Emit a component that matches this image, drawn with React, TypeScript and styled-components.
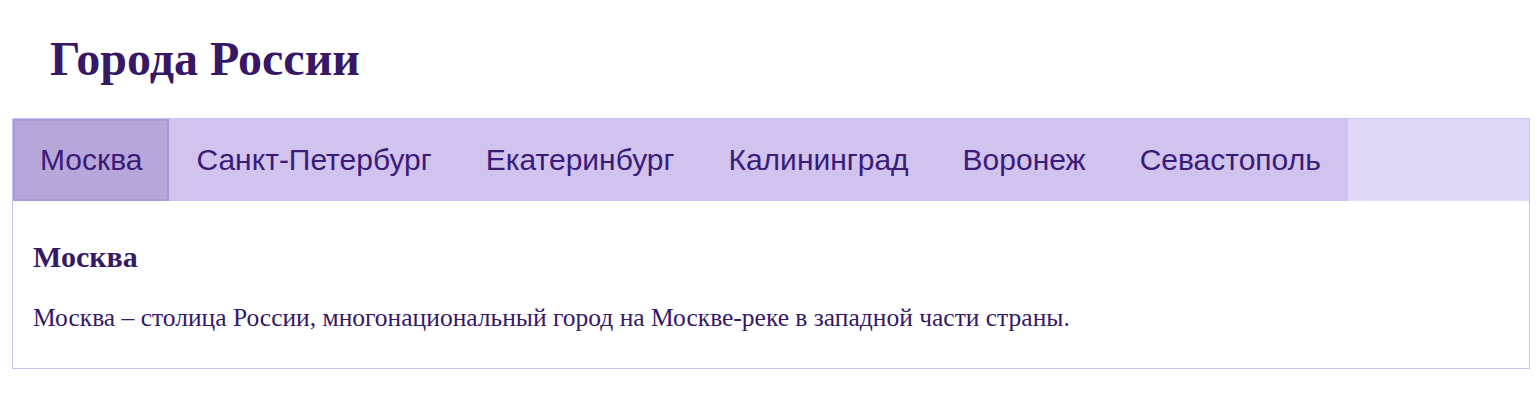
import { useState } from 'react';
import styled, { createGlobalStyle } from 'styled-components';

const GlobalStyle = createGlobalStyle`
  body {
    margin: 0;
    background: #fff;
    font-family: "Liberation Serif", "Times New Roman", serif;
  }
`;

const Page = styled.div`
  padding: 0 10px 36px 12px;
`;

const Title = styled.h1`
  margin: 0;
  padding: 30px 0 30px 38px;
  font-size: 48px;
  line-height: 58px;
  font-weight: bold;
  color: #361866;
`;

const TabsBox = styled.div`
  border: 1px solid #c8c4fa;
`;

const TabBar = styled.div`
  display: flex;
  background: #e0d8f7;
`;

const TabButton = styled.button<{ $active: boolean }>`
  border: 2px solid ${(p) => (p.$active ? '#aa98d6' : 'transparent')};
  background: ${(p) => (p.$active ? '#b7a6d9' : '#d0c4ef')};
  color: #3c1a78;
  font-family: "Liberation Sans", Arial, sans-serif;
  font-size: 30px;
  line-height: 34px;
  padding: 22px 25px;
  margin: 0;
  cursor: pointer;
`;

const Panel = styled.div`
  padding: 38px 20px 35px;
  color: #361866;
`;

const PanelTitle = styled.h3`
  margin: 0 0 28px;
  font-size: 30px;
  line-height: 36px;
  font-weight: bold;
`;

const PanelText = styled.p`
  margin: 0;
  font-size: 25.5px;
  line-height: 30px;
`;

interface City {
  name: string;
  text: string;
}

const cities: City[] = [
  { name: 'Москва', text: 'Москва – столица России, многонациональный город на Москве-реке в западной части страны.' },
  { name: 'Санкт-Петербург', text: 'Санкт-Петербург – второй по величине город России, расположенный на берегу Финского залива.' },
  { name: 'Екатеринбург', text: 'Екатеринбург – крупный город на Урале, административный центр Свердловской области.' },
  { name: 'Калининград', text: 'Калининград – самый западный областной центр России на берегу реки Преголи.' },
  { name: 'Воронеж', text: 'Воронеж – город на юго-западе России, центр Воронежской области.' },
  { name: 'Севастополь', text: 'Севастополь – город-порт на юго-западном побережье Крымского полуострова.' },
];

const App = () => {
  const [active, setActive] = useState(0);
  const city = cities[active];

  return (
    <Page>
      <GlobalStyle />
      <Title>Города России</Title>
      <TabsBox>
        <TabBar>
          {cities.map((c, i) => (
            <TabButton key={c.name} $active={i === active} onClick={() => setActive(i)}>
              {c.name}
            </TabButton>
          ))}
        </TabBar>
        <Panel>
          <PanelTitle>{city.name}</PanelTitle>
          <PanelText>{city.text}</PanelText>
        </Panel>
      </TabsBox>
    </Page>
  );
};

export default App;
